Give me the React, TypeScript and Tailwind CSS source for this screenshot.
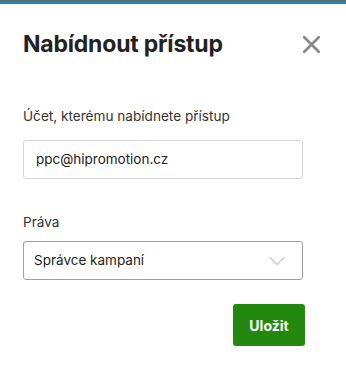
import { X, ChevronDown } from "lucide-react";

export default function App() {
  return (
    <div
      className="w-[346px] h-[369px] bg-white border-t border-[#5b6770] text-[#222]"
      style={{ fontFamily: "Inter, 'Liberation Sans', sans-serif" }}
    >
      <div className="h-[3px] bg-[#1b87c0]" />

      {/* header */}
      <div className="flex items-center justify-between pl-[23px] pr-[20px] pt-[25px]">
        <h1 className="text-[23px] leading-[30px] font-bold text-[#222] tracking-[-0.2px]">
          Nabídnout přístup
        </h1>
        <button className="text-[#8a8a8a]">
          <X size={29} strokeWidth={2.3} />
        </button>
      </div>

      {/* form */}
      <div className="px-[23px] pt-[48px] w-[305px] box-content">
        <label className="block text-[13.6px] leading-[18px] text-[#333]">
          Účet, kterému nabídnete přístup
        </label>
        <div className="mt-[15px] w-[280px] h-[39px] rounded-[3px] border border-[#d6d6d6] flex items-center px-[12px] text-[13.5px] text-[#222]">
          ppc@hipromotion.cz
        </div>

        <label className="block mt-[34px] text-[13.6px] leading-[18px] text-[#333]">
          Práva
        </label>
        <div className="mt-[10px] w-[280px] h-[39px] rounded-[3px] border border-[#a0a0a0] flex items-center justify-between pl-[10px] pr-[11px] text-[13.5px] text-[#222]">
          <span>Správce kampaní</span>
          <ChevronDown size={28} strokeWidth={1.1} className="text-[#c8c8c8]" />
        </div>

        <div className="flex justify-end w-[282px] mt-[24px]">
          <button className="w-[72px] h-[42px] rounded-[3px] bg-[#23890e] text-white text-[14px] font-bold">
            Uložit
          </button>
        </div>
      </div>
    </div>
  );
}
